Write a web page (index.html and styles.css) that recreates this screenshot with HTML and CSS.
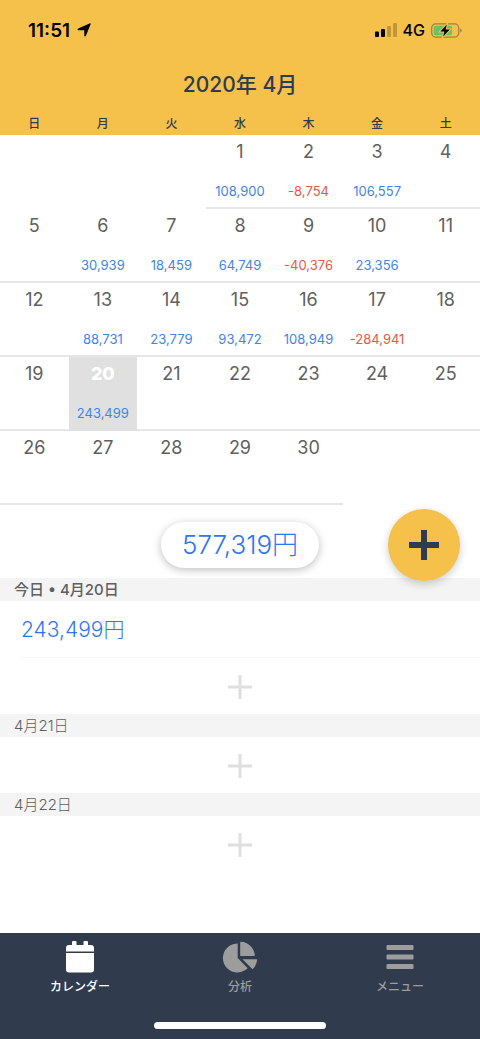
FILE: index.html
```html
<!DOCTYPE html>
<html lang="ja">
<head>
<meta charset="utf-8">
<meta name="viewport" content="width=device-width, initial-scale=1">
<title>カレンダー</title>
<link rel="stylesheet" href="styles.css">
</head>
<body>
<div class="app">
  <header class="header">
    <div class="status">
      <div class="status-group">
        <span class="time">11:51</span>
        <svg class="location" viewBox="0 0 14 14" aria-hidden="true"><path d="M13.600 1.200 8.900 12.800c-.4.900-1.600.8-1.600-.3V7.300H1.600C.3 7.300.1 5.900 1.200 5.500L12.500.4c.8-.3 1.400.1 1.100.8z"/></svg>
      </div>
      <div class="status-group status-right">
        <svg class="signal" viewBox="0 0 22 14" aria-hidden="true"><rect y="8.500" width="4" height="5.500" rx="1"/><rect x="6" y="6" width="4" height="8" rx="1"/><g opacity=".22"><rect x="12" y="3" width="4" height="11" rx="1"/><rect x="18" width="4" height="14" rx="1"/></g></svg>
        <span class="network">4G</span>
        <svg class="battery" viewBox="0 0 31 15" aria-hidden="true"><rect x=".7" y=".9" width="27" height="13.200" rx="4" fill="none" stroke="#a18036" stroke-width="1.200"/><path d="M29.200 5.300c2 .8 2 3.600 0 4.400z" fill="#a18036"/><rect x="2.600" y="2.800" width="18.500" height="9.400" rx="2" fill="#65c466"/><path d="M15.800 1.500 9.300 8.400h4.100L12.100 13.500 18.800 6.500h-4.200z" fill="#000" stroke="#f6c14b" stroke-width="2" paint-order="stroke"/></svg>
      </div>
    </div>
    <h1 class="title">2020年 4月</h1>
  </header>

  <table class="calendar">
    <thead>
      <tr><th>日</th><th>月</th><th>火</th><th>水</th><th>木</th><th>金</th><th>土</th></tr>
    </thead>
    <tbody>
      <tr>
        <td class="blank"></td><td class="blank"></td><td class="blank"></td>
        <td><span class="day">1</span><span class="sum">108,900</span></td>
        <td><span class="day">2</span><span class="sum minus">-8,754</span></td>
        <td><span class="day">3</span><span class="sum">106,557</span></td>
        <td><span class="day">4</span></td>
      </tr>
      <tr>
        <td><span class="day">5</span></td>
        <td><span class="day">6</span><span class="sum">30,939</span></td>
        <td><span class="day">7</span><span class="sum">18,459</span></td>
        <td><span class="day">8</span><span class="sum">64,749</span></td>
        <td><span class="day">9</span><span class="sum minus">-40,376</span></td>
        <td><span class="day">10</span><span class="sum">23,356</span></td>
        <td><span class="day">11</span></td>
      </tr>
      <tr>
        <td><span class="day">12</span></td>
        <td><span class="day">13</span><span class="sum">88,731</span></td>
        <td><span class="day">14</span><span class="sum">23,779</span></td>
        <td><span class="day">15</span><span class="sum">93,472</span></td>
        <td><span class="day">16</span><span class="sum">108,949</span></td>
        <td><span class="day">17</span><span class="sum minus">-284,941</span></td>
        <td><span class="day">18</span></td>
      </tr>
      <tr>
        <td><span class="day">19</span></td>
        <td class="selected"><span class="day">20</span><span class="sum">243,499</span></td>
        <td><span class="day">21</span></td>
        <td><span class="day">22</span></td>
        <td><span class="day">23</span></td>
        <td><span class="day">24</span></td>
        <td><span class="day">25</span></td>
      </tr>
      <tr>
        <td><span class="day">26</span></td>
        <td><span class="day">27</span></td>
        <td><span class="day">28</span></td>
        <td><span class="day">29</span></td>
        <td><span class="day">30</span></td>
        <td class="blank"></td><td class="blank"></td>
      </tr>
    </tbody>
  </table>

  <section class="summary">
    <div class="total">577,319円</div>
    <button class="fab" type="button" aria-label="追加"><svg viewBox="0 0 30 30" aria-hidden="true"><path d="M15 0v30M0 15h30"/></svg></button>
  </section>

  <main class="entries">
    <h2 class="date today">今日 • 4月20日</h2>
    <div class="entry">243,499円</div>
    <button class="add" type="button" aria-label="4月20日に追加"><svg viewBox="0 0 24 24" aria-hidden="true"><path d="M12 0v24M0 12h24"/></svg></button>
    <h2 class="date">4月21日</h2>
    <button class="add" type="button" aria-label="4月21日に追加"><svg viewBox="0 0 24 24" aria-hidden="true"><path d="M12 0v24M0 12h24"/></svg></button>
    <h2 class="date">4月22日</h2>
    <button class="add" type="button" aria-label="4月22日に追加"><svg viewBox="0 0 24 24" aria-hidden="true"><path d="M12 0v24M0 12h24"/></svg></button>
  </main>

  <nav class="tabbar">
    <div class="tabs">
      <a class="tab active" href="#calendar"><svg viewBox="0 0 36 32" aria-hidden="true"><path d="M4 10.500V7a3 3 0 0 1 3-3h3V1a1 1 0 0 1 1-1h2.500a1 1 0 0 1 1 1v3h7V1a1 1 0 0 1 1-1H25a1 1 0 0 1 1 1v3h3a3 3 0 0 1 3 3v3.500zM4 12h28V28.500a3 3 0 0 1-3 3H7a3 3 0 0 1-3-3z"/></svg>カレンダー</a>
      <a class="tab" href="#analysis"><svg viewBox="0 0 36 32" aria-hidden="true"><path d="M15.700 2.500v14.500l10 10.200A14.500 14.500 0 1 1 15.200 2.500zM18.200 1.500q0-.7.800-.7a14.500 14.500 0 0 1 13.800 13.500q0 .8-.8.800H18.200zM20.500 18.200h14q.8 0 .7.800-.6 5-4.200 8.800-.5.600-1 0z"/></svg>分析</a>
      <a class="tab" href="#menu"><svg viewBox="0 0 36 32" aria-hidden="true"><rect x="4.500" y="4" width="27" height="5" rx="1"/><rect x="4.500" y="13.500" width="27" height="5" rx="1"/><rect x="4.500" y="23" width="27" height="5" rx="1"/></svg>メニュー</a>
    </div>
    <div class="home"></div>
  </nav>
</div>
</body>
</html>
```

FILE: styles.css
```css
* {
  box-sizing: border-box;
}

body {
  margin: 0;
  background: #fff;
  color: #606060;
  font-family: Inter, "Noto Sans CJK JP", sans-serif;
}

button {
  border: 0;
  padding: 0;
  font: inherit;
  cursor: pointer;
}

.app {
  display: flex;
  flex-direction: column;
  min-height: 100vh;
}

.header {
  background: #f6c14b;
  color: #2f3c4e;
}

.status {
  display: flex;
  justify-content: space-between;
  align-items: center;
  height: 60px;
  padding: 0 18px 0 28px;
  color: #000;
}

.status-group {
  display: flex;
  align-items: center;
  gap: 7px;
}

.status-right {
  gap: 6px;
}

.time {
  font-size: 19px;
  font-weight: 600;
}

.location {
  width: 14px;
  height: 14px;
}

.signal {
  width: 22px;
  height: 14px;
}

.network {
  font-size: 16px;
  font-weight: 500;
}

.battery {
  width: 31px;
  height: 15px;
}

.title {
  margin: 0;
  height: 52px;
  font-size: 21px;
  font-weight: 500;
  line-height: 50px;
  text-align: center;
}

.calendar {
  width: 100%;
  table-layout: fixed;
  border-collapse: separate;
  border-spacing: 0;
}

.calendar th {
  height: 23px;
  padding: 1px 0 0;
  background: #f6c14b;
  color: #2f3c4e;
  font-size: 12px;
  font-weight: 500;
  line-height: 22px;
}

.calendar td {
  height: 74px;
  padding: 6px 0 0;
  border-bottom: 2px solid #e6e6e6;
  text-align: center;
  vertical-align: top;
}

.calendar .blank {
  border-color: transparent;
}

.calendar .selected {
  background: #e0e0e0;
  border-color: #e0e0e0;
}

.day,
.sum {
  display: block;
}

.day {
  height: 41px;
  font-size: 18px;
  line-height: 22px;
}

.selected .day {
  color: #fff;
  font-weight: 800;
}

.sum {
  color: #3f83ee;
  font-size: 13px;
  line-height: 18px;
}

.minus {
  color: #ea5648;
}

.summary {
  position: relative;
  display: flex;
  justify-content: center;
  padding: 17px 0 10px;
}

.total {
  padding: 0 21px;
  border-radius: 23px;
  background: #fff;
  box-shadow: 0 2px 8px rgba(0, 0, 0, 0.25);
  color: #2f76ee;
  font-size: 26px;
  font-weight: 300;
  line-height: 46px;
}

.fab {
  position: absolute;
  top: 4px;
  right: 20px;
  display: flex;
  align-items: center;
  justify-content: center;
  width: 72px;
  height: 72px;
  border-radius: 50%;
  background: #f6c14b;
  box-shadow: 0 3px 8px rgba(0, 0, 0, 0.2);
}

.fab svg {
  width: 30px;
  height: 30px;
  stroke: #2f3c4e;
  stroke-width: 6;
}

.entries {
  flex: 1;
}

.date {
  margin: 0;
  padding: 0 14px;
  background: #f4f4f4;
  font-size: 15px;
  font-weight: 300;
  line-height: 23px;
}

.today {
  font-weight: 500;
}

.entry {
  height: 57px;
  margin-left: 19px;
  padding-left: 2px;
  border-bottom: 1px solid #f8f8f8;
  color: #2f76ee;
  font-size: 21px;
  font-weight: 300;
  line-height: 58px;
}

.add {
  display: flex;
  align-items: center;
  justify-content: center;
  width: 100%;
  height: 56px;
  padding-top: 1px;
  background: #fff;
}

.add svg {
  width: 24px;
  height: 24px;
  stroke: #dfdfdf;
  stroke-width: 3;
}

.tabbar {
  display: flex;
  flex-direction: column;
  justify-content: space-between;
  align-items: center;
  height: 106px;
  padding: 8px 0 10px;
  background: #303c4e;
}

.tabs {
  display: flex;
  width: 100%;
}

.tab {
  display: flex;
  flex: 1;
  flex-direction: column;
  align-items: center;
  gap: 5px;
  color: #9d9d9d;
  font-size: 12px;
  font-weight: 500;
  line-height: 18px;
  text-decoration: none;
}

.tab svg {
  width: 36px;
  height: 32px;
  fill: currentColor;
}

.tab.active {
  color: #fff;
}

.home {
  width: 172px;
  height: 7px;
  border-radius: 4px;
  background: #fff;
}
```
